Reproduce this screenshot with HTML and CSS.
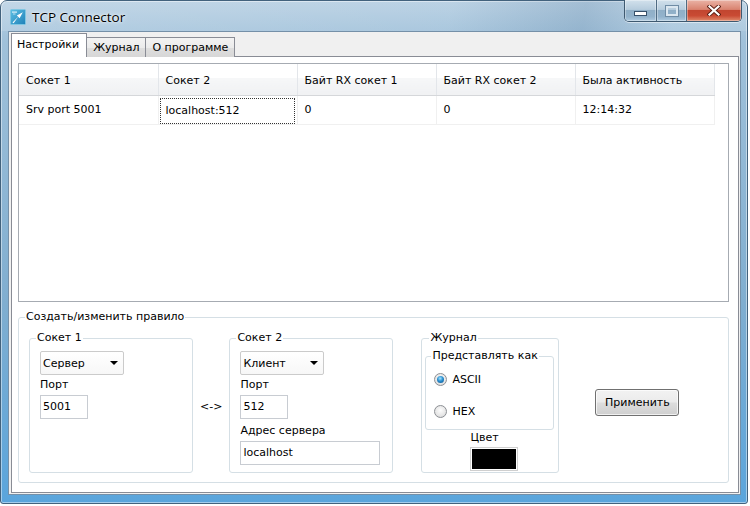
FILE: index.html
```html
<!DOCTYPE html>
<html lang="ru">
<head>
    <meta charset="UTF-8">
    <title>TCP Connector</title>
    <link rel="stylesheet" href="styles.css">
</head>
<body>
    <div class="window">
        <!-- заголовок окна -->
        <div class="titlebar">
            <svg class="app-icon" viewBox="0 0 16 16">
                <defs>
                    <linearGradient id="ig" x1="0" y1="0" x2="1" y2="1">
                        <stop offset="0" stop-color="#5cc0e4"/>
                        <stop offset="1" stop-color="#1f80b8"/>
                    </linearGradient>
                </defs>
                <rect x="0.5" y="0.5" width="15" height="15" rx="1" fill="url(#ig)" stroke="#7fc6e2"/>
                <path d="M2.5 13.5 L8.2 7.8 L6.8 6.4 L12.8 3.2 L9.6 9.2 L8.2 7.8 L3.6 14.2 Z" fill="#fff"/>
                <rect x="2" y="2.5" width="5" height="1.2" fill="#fff" opacity=".8"/>
                <rect x="3" y="4.5" width="2.5" height="1" fill="#fff" opacity=".6"/>
            </svg>
            <span class="title">TCP Connector</span>
            <div class="caps">
                <div class="cap min"><span class="min-bar"></span></div>
                <div class="cap max"><span class="max-box"></span></div>
                <div class="cap close">
                    <svg width="14" height="11" viewBox="0 0 14 11">
                        <path d="M2.5 1.5 L11.5 9.5 M11.5 1.5 L2.5 9.5" stroke="#5a1e14" stroke-width="4" stroke-linecap="square"/>
                        <path d="M2.5 1.5 L11.5 9.5 M11.5 1.5 L2.5 9.5" stroke="#fff" stroke-width="2.2" stroke-linecap="square"/>
                    </svg>
                </div>
            </div>
        </div>

        <div class="client">
            <div class="tabs">
                <div class="tab active">Настройки</div>
                <div class="tab">Журнал</div>
                <div class="tab">О программе</div>
            </div>

            <div class="tab-page">
                <!-- список правил -->
                <div class="list">
                    <table>
                        <colgroup>
                            <col><col><col><col><col>
                        </colgroup>
                        <thead>
                            <tr>
                                <th>Сокет 1</th>
                                <th>Сокет 2</th>
                                <th>Байт RX сокет 1</th>
                                <th>Байт RX сокет 2</th>
                                <th>Была активность</th>
                            </tr>
                        </thead>
                        <tbody>
                            <tr>
                                <td>Srv port 5001</td>
                                <td class="focus"><div class="focus-rect">localhost:512</div></td>
                                <td>0</td>
                                <td>0</td>
                                <td>12:14:32</td>
                            </tr>
                        </tbody>
                    </table>
                </div>

                <!-- редактирование правила -->
                <fieldset class="group rule">
                    <legend>Создать/изменить правило</legend>
                    <div class="rule-row">
                        <fieldset class="group sock">
                            <legend>Сокет 1</legend>
                            <div class="combo">Сервер<span class="arrow"></span></div>
                            <div class="field-label">Порт</div>
                            <div class="edit short">5001</div>
                        </fieldset>

                        <div class="link-sign">&lt;-&gt;</div>

                        <fieldset class="group sock">
                            <legend>Сокет 2</legend>
                            <div class="combo">Клиент<span class="arrow"></span></div>
                            <div class="field-label">Порт</div>
                            <div class="edit short">512</div>
                            <div class="field-label lower">Адрес сервера</div>
                            <div class="edit long">localhost</div>
                        </fieldset>

                        <fieldset class="group journal">
                            <legend>Журнал</legend>
                            <fieldset class="group view">
                                <legend>Представлять как</legend>
                                <div class="radio-row"><span class="radio checked"></span>ASCII</div>
                                <div class="radio-row"><span class="radio"></span>HEX</div>
                            </fieldset>
                            <div class="color-label">Цвет</div>
                            <div class="swatch"></div>
                        </fieldset>

                        <div class="apply">Применить</div>
                    </div>
                </fieldset>
            </div>
        </div>
    </div>
</body>
</html>
```

FILE: styles.css
```css
/* базовые стили */
body {
    margin: 0;
    background: #fff;
    font-family: "DejaVu Sans", "Liberation Sans", sans-serif;
    font-size: 11px;
    color: #000;
    overflow: hidden;
}

/* рамка окна Aero */
.window {
    box-sizing: border-box;
    width: 748px;
    height: 504px;
    padding: 0 6px 8px 7px;
    display: flex;
    flex-direction: column;
    border: 1px solid #42627d;
    border-radius: 7px 7px 3px 3px;
    background: linear-gradient(180deg, #b8d0e3 0, #a0c1da 40px, #80aed0 60%, #5aa5dc 100%);
    box-shadow: inset 0 0 0 1px rgba(255, 255, 255, .45);
}
.titlebar {
    height: 30px;
    flex-shrink: 0;
    display: flex;
    align-items: flex-start;
    background: linear-gradient(100deg, rgba(255, 255, 255, .15) 0%, rgba(255, 255, 255, .05) 60%, rgba(40, 80, 120, .14) 78%, rgba(255, 255, 255, .1) 90%);
    margin: 0 -6px 0 -7px;
    padding: 0 6px 0 7px;
}
.app-icon {
    width: 16px;
    height: 16px;
    margin: 8px 0 0 2px;
}
.title {
    font-family: "Open Sans", "Noto Sans", sans-serif;
    font-size: 13.5px;
    line-height: 16px;
    margin: 8px 0 0 6px;
    color: #000;
    text-shadow: 0 0 5px rgba(255, 255, 255, .9), 0 0 2px rgba(255, 255, 255, .9);
}
.caps {
    margin: -1px -1px 0 auto;
    display: flex;
    height: 21px;
    border: 1px solid #3e5970;
    border-top: none;
    border-radius: 0 0 5px 5px;
    overflow: hidden;
    box-shadow: 0 1px 0 rgba(255, 255, 255, .5);
}
.cap {
    display: flex;
    align-items: center;
    justify-content: center;
    box-shadow: inset 0 0 0 1px rgba(255, 255, 255, .35);
}
.cap.min,
.cap.max {
    width: 31px;
    border-right: 1px solid #4f6b82;
    background: linear-gradient(180deg, #d2e1ec 0%, #b6ccdd 45%, #90afc7 50%, #93b3cc 80%, #afcbe0 100%);
}
.cap.max {
    width: 29px;
}
.cap.close {
    width: 54px;
    background: linear-gradient(180deg, #eab3a6 0%, #d98370 45%, #c24630 50%, #c94b34 75%, #e08b6c 100%);
}
.min-bar {
    width: 11px;
    height: 3px;
    margin-top: 6px;
    background: #fff;
    border: 1px solid #36506a;
}
.max-box {
    width: 8px;
    height: 6px;
    border: 2px solid #dbe7f0;
    outline: 1px solid #6f8ca5;
}

/* клиентская область */
.client {
    flex: 1;
    display: flex;
    flex-direction: column;
    background: #f0f0f0;
    border: 1px solid #7590a8;
    padding: 2px 1px 1px 2px;
}
.tabs {
    display: flex;
    align-items: flex-end;
    height: 23px;
    margin-bottom: -1px;
    position: relative;
    z-index: 1;
}
.tab {
    height: 19px;
    line-height: 19px;
    padding: 0 6px;
    border: 1px solid #898c95;
    border-bottom: none;
    margin-left: -1px;
    background: linear-gradient(180deg, #f3f3f3 0%, #ebebeb 50%, #dedede 51%, #d7d7d7 100%);
}
.tab.active {
    height: 23px;
    line-height: 22px;
    margin-left: 0;
    padding: 0 7px 0 5px;
    background: #fff;
    position: relative;
    z-index: 2;
}
.tab-page {
    flex: 1;
    border: 1px solid #898c95;
    background: #fff;
    padding: 6px 9px 0 6px;
}

/* таблица */
.list {
    box-sizing: border-box;
    height: 239px;
    border: 1px solid #a6abb2;
}
.list table {
    border-collapse: collapse;
    table-layout: fixed;
    width: 695px;
}
.list col {
    width: 139px;
}
.list th {
    height: 31px;
    box-sizing: border-box;
    padding: 2px 0 0 7px;
    text-align: left;
    font-weight: normal;
    border-right: 1px solid #e3e6ea;
    border-bottom: 1px solid #d5d7da;
    background: linear-gradient(180deg, #fff 0%, #fff 45%, #f6f7f8 46%, #f0f1f3 100%);
    white-space: nowrap;
}
.list td {
    height: 28px;
    padding: 0 0 0 7px;
    border-right: 1px solid #f0f0f0;
    border-bottom: 1px solid #f0f0f0;
    white-space: nowrap;
}
.list td.focus {
    padding: 0;
    vertical-align: top;
}
.focus-rect {
    height: 24px;
    line-height: 24px;
    margin: 2px 2px 0 1px;
    padding-left: 5px;
    border: 1px dotted #333;
}

/* групповые рамки */
.group {
    border: 1px solid #d5dfe5;
    border-radius: 3px;
    margin: 0;
    min-width: 0;
}
.group legend {
    line-height: 14px;
    padding: 0 1px;
    margin-left: -4px;
}
.rule {
    margin-top: 8px;
    padding: 7px 10px 9px;
}
.rule-row {
    display: flex;
    height: 142px;
}
.sock {
    box-sizing: border-box;
    width: 164px;
    padding: 6px 10px 0;
}
.combo {
    box-sizing: border-box;
    width: 84px;
    height: 24px;
    display: flex;
    align-items: center;
    padding-left: 2px;
    border: 1px solid #cbcbcb;
    border-radius: 2px;
    background: linear-gradient(180deg, #fff 0%, #f7f7f7 100%);
}
.arrow {
    margin-left: auto;
    margin-right: 5px;
    border-left: 4px solid transparent;
    border-right: 4px solid transparent;
    border-top: 4px solid #000;
}
.field-label {
    line-height: 15px;
    margin-top: 2px;
}
.field-label.lower {
    margin-top: 4px;
}
.edit {
    box-sizing: border-box;
    height: 24px;
    line-height: 22px;
    padding-left: 2px;
    margin-top: 3px;
    border: 1px solid #c8ccd2;
}
.edit.short {
    width: 48px;
}
.edit.long {
    width: 140px;
}
.link-sign {
    align-self: center;
    margin: 0 7px;
    padding-top: 8px;
    white-space: nowrap;
}
.journal {
    box-sizing: border-box;
    width: 138px;
    margin-left: 28px;
    padding: 4px 4px 0 3px;
}
.journal > legend {
    margin-left: 4px;
}
.view {
    padding: 0 0 2px 8px;
}
.view legend {
    margin-left: -3px;
}
.radio-row {
    height: 32px;
    display: flex;
    align-items: center;
    gap: 5px;
}
.radio {
    box-sizing: border-box;
    width: 13px;
    height: 13px;
    border-radius: 50%;
    border: 1px solid #8c8f94;
    background: radial-gradient(circle at 50% 40%, #fdfdfd 0%, #e6e6e6 60%, #d2d2d2 100%);
    display: flex;
    align-items: center;
    justify-content: center;
}
.radio.checked::after {
    content: "";
    width: 7px;
    height: 7px;
    border-radius: 50%;
    background: radial-gradient(circle at 45% 35%, #a8e6ff 0%, #2a8fd0 45%, #0c4f8a 100%);
}
.color-label {
    margin-left: 45px;
    line-height: 15px;
}
.swatch {
    box-sizing: border-box;
    width: 48px;
    height: 24px;
    margin: 2px 0 0 45px;
    border: 1px solid #cfcfcf;
    padding: 1px;
    background: #000;
    background-clip: content-box;
}
.apply {
    box-sizing: border-box;
    align-self: center;
    width: 84px;
    height: 27px;
    line-height: 25px;
    margin-left: 36px;
    text-align: center;
    border: 1px solid #707070;
    border-radius: 3px;
    background: linear-gradient(180deg, #f2f2f2 0%, #ebebeb 48%, #dddddd 52%, #cfcfcf 100%);
    box-shadow: inset 0 0 0 1px rgba(255, 255, 255, .7);
}
```
